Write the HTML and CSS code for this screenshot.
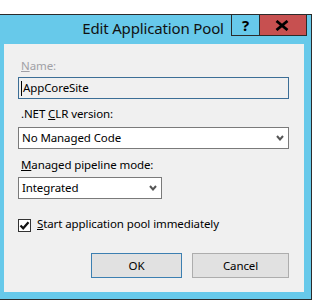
FILE: index.html
```html
<!DOCTYPE html>
<html>
<head>
	<meta charset="UTF-8">
	<title>Edit Application Pool</title>
	<link rel="stylesheet" href="styles.css">
</head>
<body>
	<div class="window">
		<div class="titlebar">Edit Application Pool</div>
		<div class="caption-btns">
			<span class="btn-help">?</span>
			<span class="btn-close">
				<svg width="14" height="11" viewBox="0 0 14 11">
					<path d="M1.5 1 L12.5 10 M12.5 1 L1.5 10" stroke="#000" stroke-width="2.8" fill="none"/>
				</svg>
			</span>
		</div>

		<div class="client">
			<div class="label disabled"><u>N</u>ame:</div>
			<div class="textbox"><span class="caret"></span>AppCoreSite</div>

			<div class="label label-gap">.NET <u>C</u>LR version:</div>
			<div class="combo">
				<span>No Managed Code</span>
				<svg width="8" height="6" viewBox="0 0 8 6"><path d="M1 1 L4 4.5 L7 1" stroke="#555" stroke-width="2" fill="none"/></svg>
			</div>

			<div class="label label-gap2"><u>M</u>anaged pipeline mode:</div>
			<div class="combo combo-small">
				<span>Integrated</span>
				<svg width="8" height="6" viewBox="0 0 8 6"><path d="M1 1 L4 4.5 L7 1" stroke="#555" stroke-width="2" fill="none"/></svg>
			</div>

			<div class="check-row">
				<span class="checkbox">
					<svg width="11" height="11" viewBox="0 0 11 11"><path d="M1.5 5.5 L4.2 8.3 L9.5 2.2" stroke="#111" stroke-width="2.2" fill="none"/></svg>
				</span>
				<span><u>S</u>tart application pool immediately</span>
			</div>

			<div class="actions">
				<button class="btn btn-default">OK</button>
				<button class="btn btn-cancel">Cancel</button>
			</div>
		</div>
	</div>
</body>
</html>
```

FILE: styles.css
```css
body{
	margin:0;
	background:#fff;
	font-family:"Segoe UI","Noto Sans",sans-serif;
	font-size:11.5px;
	letter-spacing:-0.1px;
	color:#000;
}
.window{
	position:relative;
	width:312px;
	margin-top:14px;
	box-sizing:border-box;
	background:#67c9ea;
	border:1px solid #2b2b2b;
	border-left:none;
	padding:0 7px 7px 4px;
}
.titlebar{
	height:29px;
	line-height:27px;
	font-size:15px;
	letter-spacing:-0.15px;
	text-align:center;
	color:#111;
	padding-right:2px;
}
.caption-btns{
	position:absolute;
	top:-1px;
	right:4px;
	display:flex;
}
.btn-help{
	width:27px;
	height:20px;
	border:1px solid #2b2b2b;
	text-align:center;
	font-weight:bold;
	font-size:15px;
	line-height:20px;
}
.btn-close{
	width:43px;
	height:20px;
	border:1px solid #2b2b2b;
	border-left:none;
	background:#c75050;
	display:flex;
	justify-content:center;
	align-items:center;
	padding-right:3px;
}
.client{
	height:248px;
	background:#f0f0f0;
	padding:14px 15px 0 14px;
	box-sizing:border-box;
	display:flex;
	flex-direction:column;
	align-items:flex-start;
}
.label{
	height:16px;
	line-height:16px;
	padding-left:3px;
	margin-bottom:3px;
}
.disabled{
	color:#a0a0a6;
}
.label-gap{
	margin-top:7px;
	margin-bottom:5px;
}
.label-gap2{
	margin-top:8px;
	margin-bottom:4px;
}
.textbox{
	width:271px;
	height:22px;
	box-sizing:border-box;
	border:1px solid #3c6e96;
	line-height:20px;
	padding-left:2px;
	display:flex;
	align-items:center;
}
.caret{
	width:1px;
	height:15px;
	background:#000;
	margin-right:1px;
}
.combo{
	width:271px;
	height:22px;
	box-sizing:border-box;
	border:1px solid #7a7a7a;
	background:#fff;
	line-height:20px;
	padding:0 4px 0 3px;
	display:flex;
	justify-content:space-between;
	align-items:center;
}
.combo-small{
	width:144px;
}
.check-row{
	display:flex;
	align-items:flex-start;
	height:16px;
	line-height:16px;
	margin-top:17px;
}
.checkbox{
	width:13px;
	height:13px;
	box-sizing:border-box;
	border:1px solid #333;
	background:#fff;
	margin-top:3px;
	margin-right:6px;
	display:flex;
	justify-content:center;
	align-items:center;
}
.actions{
	align-self:stretch;
	display:flex;
	justify-content:flex-end;
	gap:10px;
	margin-top:21px;
}
.btn{
	height:25px;
	font-family:inherit;
	font-size:11.5px;
	letter-spacing:-0.1px;
	background:#e1e1e1;
	border:1px solid #adadad;
	padding:0;
	color:#000;
}
.btn-default{
	width:91px;
	border-color:#3c7fb1;
}
.btn-cancel{
	width:97px;
}
```
